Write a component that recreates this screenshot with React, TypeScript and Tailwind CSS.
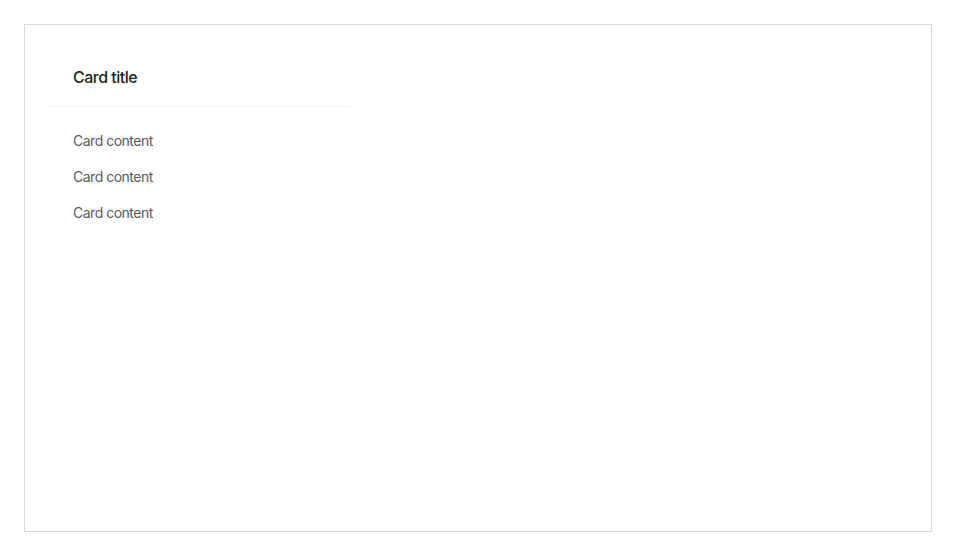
export default function App() {
  const rows = ["Card content", "Card content", "Card content"];

  return (
    <div className="bg-white p-6 font-['Inter',sans-serif]">
      <div className="h-[508px] border border-[#d9d9d9] p-6">
        <div className="w-[300px] rounded-lg bg-white">
          <div className="flex min-h-[58px] items-center border-b border-[#f0f0f0] px-6 pb-[2px] text-base font-medium tracking-[-0.5px] text-[#1f1f1f]">
            Card title
          </div>
          <div className="px-6 pb-6 pt-[23px] text-sm leading-[22px] tracking-[-0.5px] text-[#595959]">
            {rows.map((r, i) => (
              <p key={i} className="mb-[14px] last:mb-0">
                {r}
              </p>
            ))}
          </div>
        </div>
      </div>
    </div>
  );
}
